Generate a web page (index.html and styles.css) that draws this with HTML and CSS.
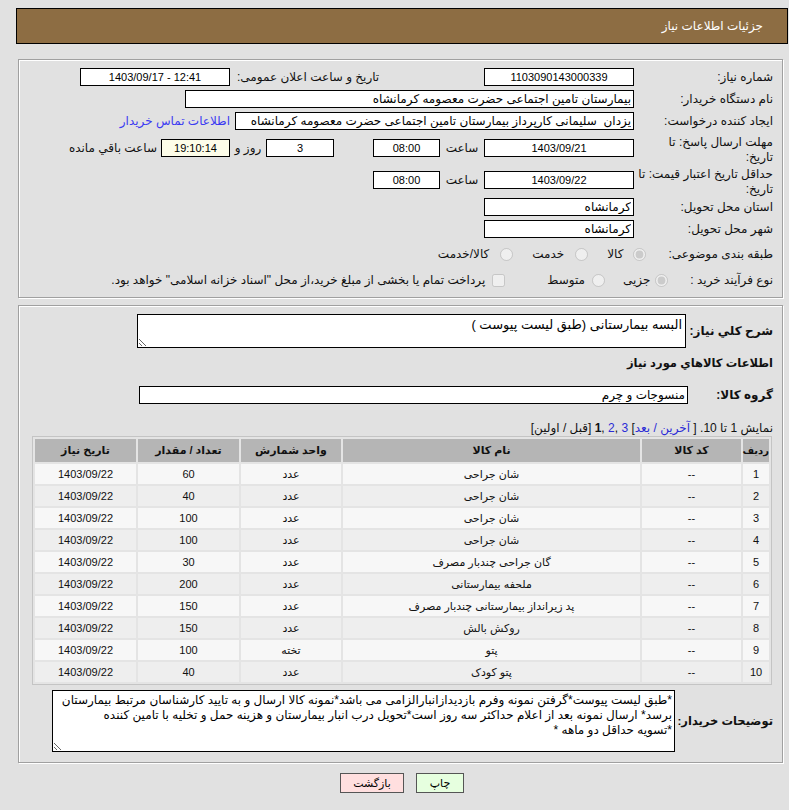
FILE: index.html
```html
<!DOCTYPE html>
<html lang="fa" dir="rtl">
<head>
<meta charset="utf-8">
<title>جزئیات اطلاعات نیاز</title>
<link rel="stylesheet" href="styles.css">
</head>
<body>
<div class="titlebar"><span>جزئیات اطلاعات نیاز</span></div>

<div class="panel info">
  <div class="frow">
    <div class="flabel">شماره نیاز:</div>
    <input class="box w150 num" value="1103090143000339" readonly>
    <div class="sublabel">تاریخ و ساعت اعلان عمومی:</div>
    <input class="box w150 num ltr gap4" value="1403/09/17 - 12:41" readonly>
  </div>
  <div class="frow">
    <div class="flabel">نام دستگاه خریدار:</div>
    <input class="box w449" value="بیمارستان تامین اجتماعی حضرت معصومه کرمانشاه" readonly>
  </div>
  <div class="frow">
    <div class="flabel">ایجاد کننده درخواست:</div>
    <input class="box w399" value="یزدان  سلیمانی کارپرداز بیمارستان تامین اجتماعی حضرت معصومه کرمانشاه" readonly>
    <a class="link" href="#">اطلاعات تماس خریدار</a>
  </div>
  <div class="frow tall">
    <div class="flabel wrap">مهلت ارسال پاسخ: تا<br>تاریخ:</div>
    <input class="box w150 num" value="1403/09/21" readonly>
    <span class="unit">ساعت</span>
    <input class="box w67 num" value="08:00" readonly>
    <input class="box w68 num gap39" value="3" readonly>
    <span class="unit days">روز و</span>
    <input class="box w69 num remain" value="19:10:14" readonly>
    <span class="after">ساعت باقي مانده</span>
  </div>
  <div class="frow tall">
    <div class="flabel wrap">حداقل تاریخ اعتبار قیمت: تا<br>تاریخ:</div>
    <input class="box w150 num" value="1403/09/22" readonly>
    <span class="unit">ساعت</span>
    <input class="box w67 num" value="08:00" readonly>
  </div>
  <div class="frow">
    <div class="flabel">استان محل تحویل:</div>
    <input class="box w150" value="کرمانشاه" readonly>
  </div>
  <div class="frow">
    <div class="flabel">شهر محل تحویل:</div>
    <input class="box w150" value="کرمانشاه" readonly>
  </div>
  <div class="frow radios r8">
    <div class="flabel auto">طبقه بندی موضوعی:</div>
    <input type="radio" name="cat" class="choice" checked disabled>
    <span class="opt o1">کالا</span>
    <input type="radio" name="cat" class="choice rgap" disabled>
    <span class="opt o2">خدمت</span>
    <input type="radio" name="cat" class="choice rgap" disabled>
    <span class="opt o2">کالا/خدمت</span>
  </div>
  <div class="frow radios r9">
    <div class="flabel auto">نوع فرآیند خرید :</div>
    <input type="radio" name="proc" class="choice" checked disabled>
    <span class="opt o3">جزیی</span>
    <input type="radio" name="proc" class="choice rgap2" disabled>
    <span class="opt o4">متوسط</span>
    <input type="checkbox" class="choice chk" disabled>
    <span class="opt o4">پرداخت تمام یا بخشی از مبلغ خرید،از محل "اسناد خزانه اسلامی" خواهد بود.</span>
  </div>
</div>

<div class="panel items">
  <div class="drow">
    <div class="dlabel l87">شرح کلي نیاز:</div>
    <textarea class="tbox summary" readonly>البسه بیمارستانی (طبق لیست پیوست )</textarea>
  </div>
  <div class="section-title">اطلاعات کالاهاي مورد نياز</div>
  <div class="drow group">
    <div class="dlabel l85">گروه کالا:</div>
    <input class="box w549" value="منسوجات و چرم" readonly>
  </div>
  <div class="pager">نمایش 1 تا 10. [ <a href="#">آخرین / بعد</a>] <a href="#">3</a> ,<a href="#">2</a> ,<b>1</b> [قبل / اولین]</div>
  <table class="grid">
    <colgroup>
      <col class="c1"><col class="c2"><col class="c3"><col class="c4"><col class="c5"><col class="c6">
    </colgroup>
    <thead>
      <tr><th class="th-idx">ردیف</th><th>کد کالا</th><th>نام کالا</th><th>واحد شمارش</th><th>تعداد / مقدار</th><th>تاریخ نیاز</th></tr>
    </thead>
    <tbody>
      <tr><td>1</td><td>--</td><td>شان جراحی</td><td>عدد</td><td>60</td><td>1403/09/22</td></tr>
      <tr><td>2</td><td>--</td><td>شان جراحی</td><td>عدد</td><td>40</td><td>1403/09/22</td></tr>
      <tr><td>3</td><td>--</td><td>شان جراحی</td><td>عدد</td><td>100</td><td>1403/09/22</td></tr>
      <tr><td>4</td><td>--</td><td>شان جراحی</td><td>عدد</td><td>100</td><td>1403/09/22</td></tr>
      <tr><td>5</td><td>--</td><td>گان جراحی چندبار مصرف</td><td>عدد</td><td>30</td><td>1403/09/22</td></tr>
      <tr><td>6</td><td>--</td><td>ملحفه بیمارستانی</td><td>عدد</td><td>200</td><td>1403/09/22</td></tr>
      <tr><td>7</td><td>--</td><td>پد زیرانداز بیمارستانی چندبار مصرف</td><td>عدد</td><td>150</td><td>1403/09/22</td></tr>
      <tr><td>8</td><td>--</td><td>روکش بالش</td><td>عدد</td><td>150</td><td>1403/09/22</td></tr>
      <tr><td>9</td><td>--</td><td>پتو</td><td>تخته</td><td>100</td><td>1403/09/22</td></tr>
      <tr><td>10</td><td>--</td><td>پتو کودک</td><td>عدد</td><td>40</td><td>1403/09/22</td></tr>
    </tbody>
  </table>
  <div class="drow notes">
    <div class="dlabel l98 nowrap">توضیحات خریدار:</div>
    <textarea class="tbox notes-box" readonly>*طبق لیست پیوست*گرفتن نمونه وفرم بازدیدازانبارالزامی می باشد*نمونه کالا ارسال و به تایید کارشناسان مرتبط بیمارستان برسد* ارسال نمونه بعد از اعلام حداکثر سه روز است*تحویل درب انبار بیمارستان و هزینه حمل و تخلیه با تامین کننده 
*تسویه حداقل دو ماهه *</textarea>
  </div>
</div>

<div class="actions">
  <button class="btn print" type="button">چاپ</button>
  <button class="btn back" type="button">بازگشت</button>
</div>
</body>
</html>
```

FILE: styles.css
```css
* { box-sizing: border-box; }
html, body { margin: 0; padding: 0; }
body {
  width: 789px;
  height: 810px;
  overflow: hidden;
  background: #e1e1e1;
  font-family: "Liberation Sans", "DejaVu Sans", sans-serif;
  font-size: 12px;
  color: #111;
}

.titlebar {
  margin: 8px 1px 0 16px;
  height: 36px;
  background: #8d6d43;
  border: 1px solid #000;
  color: #fff;
  font-size: 12px;
  display: flex;
  align-items: center;
  padding-right: 24px;
}

.panel {
  margin: 15px 6px 0 18px;
  border: 1px solid #a0a0a0;
  box-shadow: inset 1px 1px 0 #fff, 1px 1px 0 #fff;
}
.info { height: 239px; padding: 6px 9px 0 9px; }
.items { margin-top: 7px; padding: 8px 9px 10px 9px; }

.frow { display: flex; align-items: center; height: 22px; white-space: nowrap; }
.frow.tall { height: 32px; }
.frow.r8 { height: 28px; }
.frow.r9 { height: 24px; }

.flabel { width: 139px; flex: none; text-align: right; }
.flabel.wrap { line-height: 15px; padding-top: 3px; }
.flabel.auto { width: auto; margin-left: 22px; }

.box {
  height: 18px;
  border: 1px solid #000;
  background: #fff;
  font: inherit;
  color: #000;
  padding: 0 2px;
  margin: 0;
  border-radius: 0;
  outline: none;
  flex: none;
}
.num { font-size: 11px; text-align: center; }
.ltr { direction: ltr; }
.w150 { width: 150px; }
.w449 { width: 449px; }
.w399 { width: 399px; }
.w67 { width: 67px; }
.w68 { width: 68px; }
.w69 { width: 69px; }
.w549 { width: 549px; }
.gap4 { margin-right: 4px; }
.gap39 { margin-right: 39px; }
.remain { background: #fdfde9; }

.sublabel { width: 250px; flex: none; text-align: left; padding-left: 3px; }
.link { color: #3a3af2; text-decoration: none; margin-right: 5px; }
.unit { width: 44px; flex: none; text-align: center; }
.unit.days { width: 36px; }
.after { margin-right: 4px; }

.choice { width: 13px; height: 13px; margin: 0; flex: none; }
.choice.rgap { margin-right: 19px; }
.choice.rgap2 { margin-right: 18px; }
.choice.chk { margin-right: 42px; }
.opt.o1 { margin-right: 10px; }
.opt.o2 { margin-right: 11px; }
.opt.o3 { margin-right: 5px; }
.opt.o4 { margin-right: 7px; }

.drow { display: flex; align-items: center; }
.dlabel { flex: none; font-weight: bold; font-size: 12px; text-align: right; }
.dlabel.nowrap { white-space: nowrap; font-size: 11.5px; }
.l87 { width: 87px; }
.l85 { width: 85px; }
.l98 { width: 98px; }

.tbox {
  border: 1px solid #000;
  background: #fff;
  color: #000;
  margin: 0;
  border-radius: 0;
  outline: none;
  font-family: inherit;
}
.summary { width: 549px; height: 34px; font-size: 13px; padding: 2px 3px; }
.notes-box { width: 623px; height: 62px; font-size: 12px; line-height: 15px; padding: 2px 2px; overflow: hidden; }

.section-title { height: 30px; line-height: 30px; font-weight: bold; font-size: 11.5px; }
.group { margin-top: 8px; }
.pager { margin-top: 17px; height: 14px; line-height: 14px; font-size: 12px; }
.pager a { color: #2b2bd6; text-decoration: none; }

.grid {
  width: 740px;
  margin: 1px 1px 0 0;
  table-layout: fixed;
  border-collapse: separate;
  border-spacing: 2px;
  border: 1px solid #c4c4c4;
  background: #e4e4e4;
  font-size: 11px;
}
.grid .c1 { width: 26px; }
.grid .c2 { width: 99px; }
.grid .c3 { width: 297px; }
.grid .c4 { width: 100px; }
.grid .c5 { width: 101px; }
.grid .c6 { width: 101px; }
.grid th { background: #b5b5b5; height: 23px; padding: 0; font-weight: bold; text-align: center; }
.grid th.th-idx { font-size: 10px; }
.grid td { height: 20px; padding: 0; text-align: center; }
.grid tbody tr:nth-child(odd) td { background: #f7f7f7; }
.grid tbody tr:nth-child(even) td { background: #eeeeee; }

.notes { margin-top: 5px; }

.actions { display: flex; justify-content: center; gap: 12px; margin-top: 10px; padding-left: 15px; }
.btn { height: 20px; border: 1px solid #555; font: inherit; font-size: 11px; padding: 0; color: #000; border-radius: 0; }
.print { width: 48px; background: #e6ffdf; }
.back { width: 64px; background: #ffdfdf; }
```
